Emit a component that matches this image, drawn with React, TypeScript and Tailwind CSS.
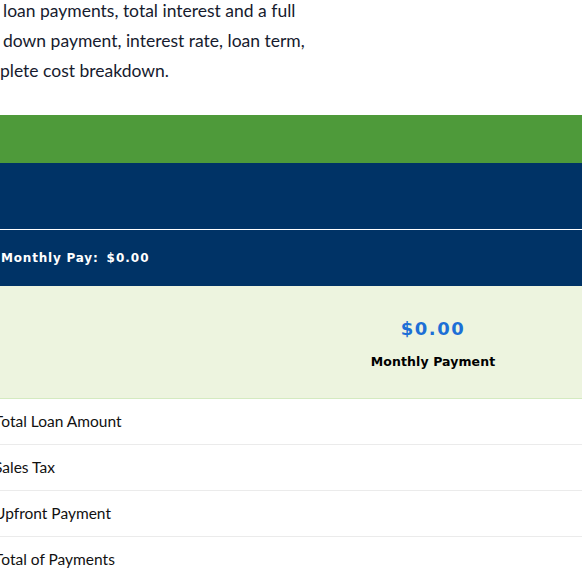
import React from "react";

const rows = ["Total Loan Amount", "Sales Tax", "Upfront Payment", "Total of Payments"];

export default function App() {
  return (
    <div className="w-[582px] h-[582px] overflow-hidden bg-white" style={{ fontFamily: "Lato, 'Noto Sans', sans-serif" }}>
      <div className="mt-[-4px] h-[119px] text-[17.5px] leading-[30px] text-[#161b2e]">
        <div className="pl-[3px]">loan payments, total interest and a full</div>
        <div className="pl-[3px]">down payment, interest rate, loan term,</div>
        <div>plete cost breakdown.</div>
      </div>
      <div className="h-[48px] bg-[#4e9a3a]" />
      <div className="h-[66px] bg-[#003366] border-b border-white box-content" />
      <div className="h-[56px] bg-[#003366] flex items-center pl-[1px] text-white text-[12px] font-bold" style={{ fontFamily: "'DejaVu Sans', sans-serif" }}>
        <span className="tracking-[0.8px]">Monthly Pay:</span>
        <span className="ml-[8px] tracking-[1px]">$0.00</span>
      </div>
      <div className="h-[112px] bg-[#edf4df] border-b border-[#d4eac0] box-content flex">
        <div className="flex-1" />
        <div className="w-[298px] flex flex-col items-center pt-[31px]">
          <div className="text-[18px] leading-[24px] font-bold text-[#1c6fd6] tracking-[1.5px]" style={{ fontFamily: "'DejaVu Sans', sans-serif" }}>$0.00</div>
          <div className="mt-[12px] text-[12.5px] leading-[18px] font-bold text-black tracking-[0.1px]" style={{ fontFamily: "'DejaVu Sans', sans-serif" }}>Monthly Payment</div>
        </div>
      </div>
      {rows.map((r) => (
        <div key={r} className="h-[45px] border-b border-[#ebebeb] box-content flex items-center ml-[-6px] text-[15.5px] text-[#111]">
          {r}
        </div>
      ))}
    </div>
  );
}
